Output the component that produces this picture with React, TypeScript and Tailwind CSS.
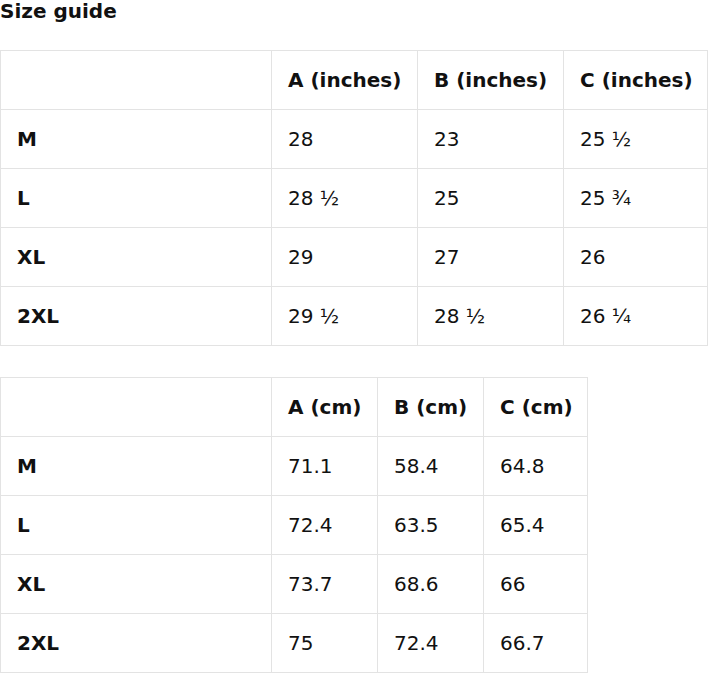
import React from "react";

const inches = {
  head: ["A (inches)", "B (inches)", "C (inches)"],
  rows: [
    ["M", "28", "23", "25 ½"],
    ["L", "28 ½", "25", "25 ¾"],
    ["XL", "29", "27", "26"],
    ["2XL", "29 ½", "28 ½", "26 ¼"],
  ],
  widths: ["w-[271px]", "w-[146px]", "w-[146px]", "w-[144px]"],
  table: "w-[708px]",
};

const cm = {
  head: ["A (cm)", "B (cm)", "C (cm)"],
  rows: [
    ["M", "71.1", "58.4", "64.8"],
    ["L", "72.4", "63.5", "65.4"],
    ["XL", "73.7", "68.6", "66"],
    ["2XL", "75", "72.4", "66.7"],
  ],
  widths: ["w-[271px]", "w-[106px]", "w-[106px]", "w-[104px]"],
  table: "w-[588px]",
};

const cell = "border-r border-b border-[#e3e3e3] px-4 py-4 leading-[26px] text-left whitespace-nowrap";

function SizeTable({ data }: { data: typeof inches }) {
  return (
    <table className={"table-fixed border-separate border-spacing-0 border-l border-t border-[#e3e3e3] " + data.table}>
      <thead>
        <tr>
          <th className={cell + " font-bold " + data.widths[0]}></th>
          {data.head.map((h, i) => (
            <th key={h} className={cell + " font-bold " + data.widths[i + 1]}>
              {h}
            </th>
          ))}
        </tr>
      </thead>
      <tbody>
        {data.rows.map((r) => (
          <tr key={r[0]}>
            {r.map((c, i) => (
              <td key={i} className={cell + " " + (i === 0 ? "font-bold" : "font-normal")}>
                {c}
              </td>
            ))}
          </tr>
        ))}
      </tbody>
    </table>
  );
}

export default function App() {
  return (
    <div className="bg-white text-[#111] text-[20px] font-['DejaVu_Sans',sans-serif] min-h-[673px]">
      <h2 className="font-bold text-[20px] leading-[22px]">Size guide</h2>
      <div className="mt-[28px]">
        <SizeTable data={inches} />
      </div>
      <div className="mt-[31px]">
        <SizeTable data={cm} />
      </div>
    </div>
  );
}
